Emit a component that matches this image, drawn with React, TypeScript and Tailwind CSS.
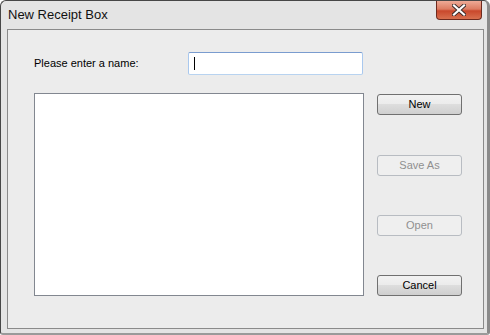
import React from "react";

function Btn({ label, disabled, className = "" }: { label: string; disabled?: boolean; className?: string }) {
  return (
    <div
      className={
        "w-[85px] h-[21px] rounded-[3px] border flex items-center justify-center text-[11px] leading-none " +
        (disabled
          ? "border-[#b8bcc2] text-[#8f8f8f] bg-[#efefef] "
          : "border-[#707070] text-black bg-[linear-gradient(to_bottom,#f2f2f2_0%,#ebebeb_48%,#dddddd_50%,#cfcfcf_100%)] ") +
        className
      }
      style={{ fontFamily: '"Liberation Sans", Arial, sans-serif' }}
    >
      {label}
    </div>
  );
}

export default function App() {
  return (
    <div className="w-[490px] h-[335px] bg-white">
      <div className="w-[490px] h-[335px] rounded-t-[6px] rounded-b-[3px] border border-[#474747] border-r-[3px] border-r-[#8a8a8a] border-b-[2px] border-b-[#9a9a9a] bg-[#e4e4e4] flex flex-col">
        <div className="h-[28px] flex items-start justify-between pl-[7px] pr-[5px]">
          <div
            className="pt-[6px] text-[13px] leading-[16px] text-[#111]"
            style={{ fontFamily: '"Liberation Sans", Arial, sans-serif' }}
          >
            New Receipt Box
          </div>
          <div className="w-[46px] h-[19px] rounded-b-[4px] border border-t-0 border-[#6e2a1e] bg-[linear-gradient(to_bottom,#eeaa96_0%,#dc7c62_45%,#c9482c_55%,#d8704f_100%)] flex items-center justify-center">
            <svg width="14" height="12" viewBox="0 0 14 12">
              <path d="M2 1.5 L12 10.5 M12 1.5 L2 10.5" stroke="#3a2a28" strokeWidth="4" strokeLinecap="square" />
              <path d="M2 1.5 L12 10.5 M12 1.5 L2 10.5" stroke="#ffffff" strokeWidth="2.2" strokeLinecap="square" />
            </svg>
          </div>
        </div>
        <div className="ml-[6px] mr-[3px] mb-[4px] flex-1 border border-[#8a8a8a] bg-[#ececec] flex flex-col pl-[26px]">
          <div className="mt-[22px] h-[23px] flex items-center">
            <div
              className="w-[154px] text-[11px] text-black"
              style={{ fontFamily: '"Liberation Sans", Arial, sans-serif' }}
            >
              Please enter a name:
            </div>
            <div className="w-[175px] h-[23px] rounded-[2px] border border-[#7a9ccf] border-b-[#b8d3f0] border-l-[#a9c8ee] border-r-[#a9c8ee] bg-white flex items-center pl-[5px]">
              <div className="w-px h-[13px] bg-black" />
            </div>
          </div>
          <div className="mt-[18px] flex">
            <div className="w-[330px] h-[203px] border border-[#828790] bg-white" />
            <div className="ml-[13px] mt-[1px] flex flex-col">
              <Btn label="New" />
              <Btn label="Save As" disabled className="mt-[40px]" />
              <Btn label="Open" disabled className="mt-[39px]" />
              <Btn label="Cancel" className="mt-[39px]" />
            </div>
          </div>
        </div>
      </div>
    </div>
  );
}
